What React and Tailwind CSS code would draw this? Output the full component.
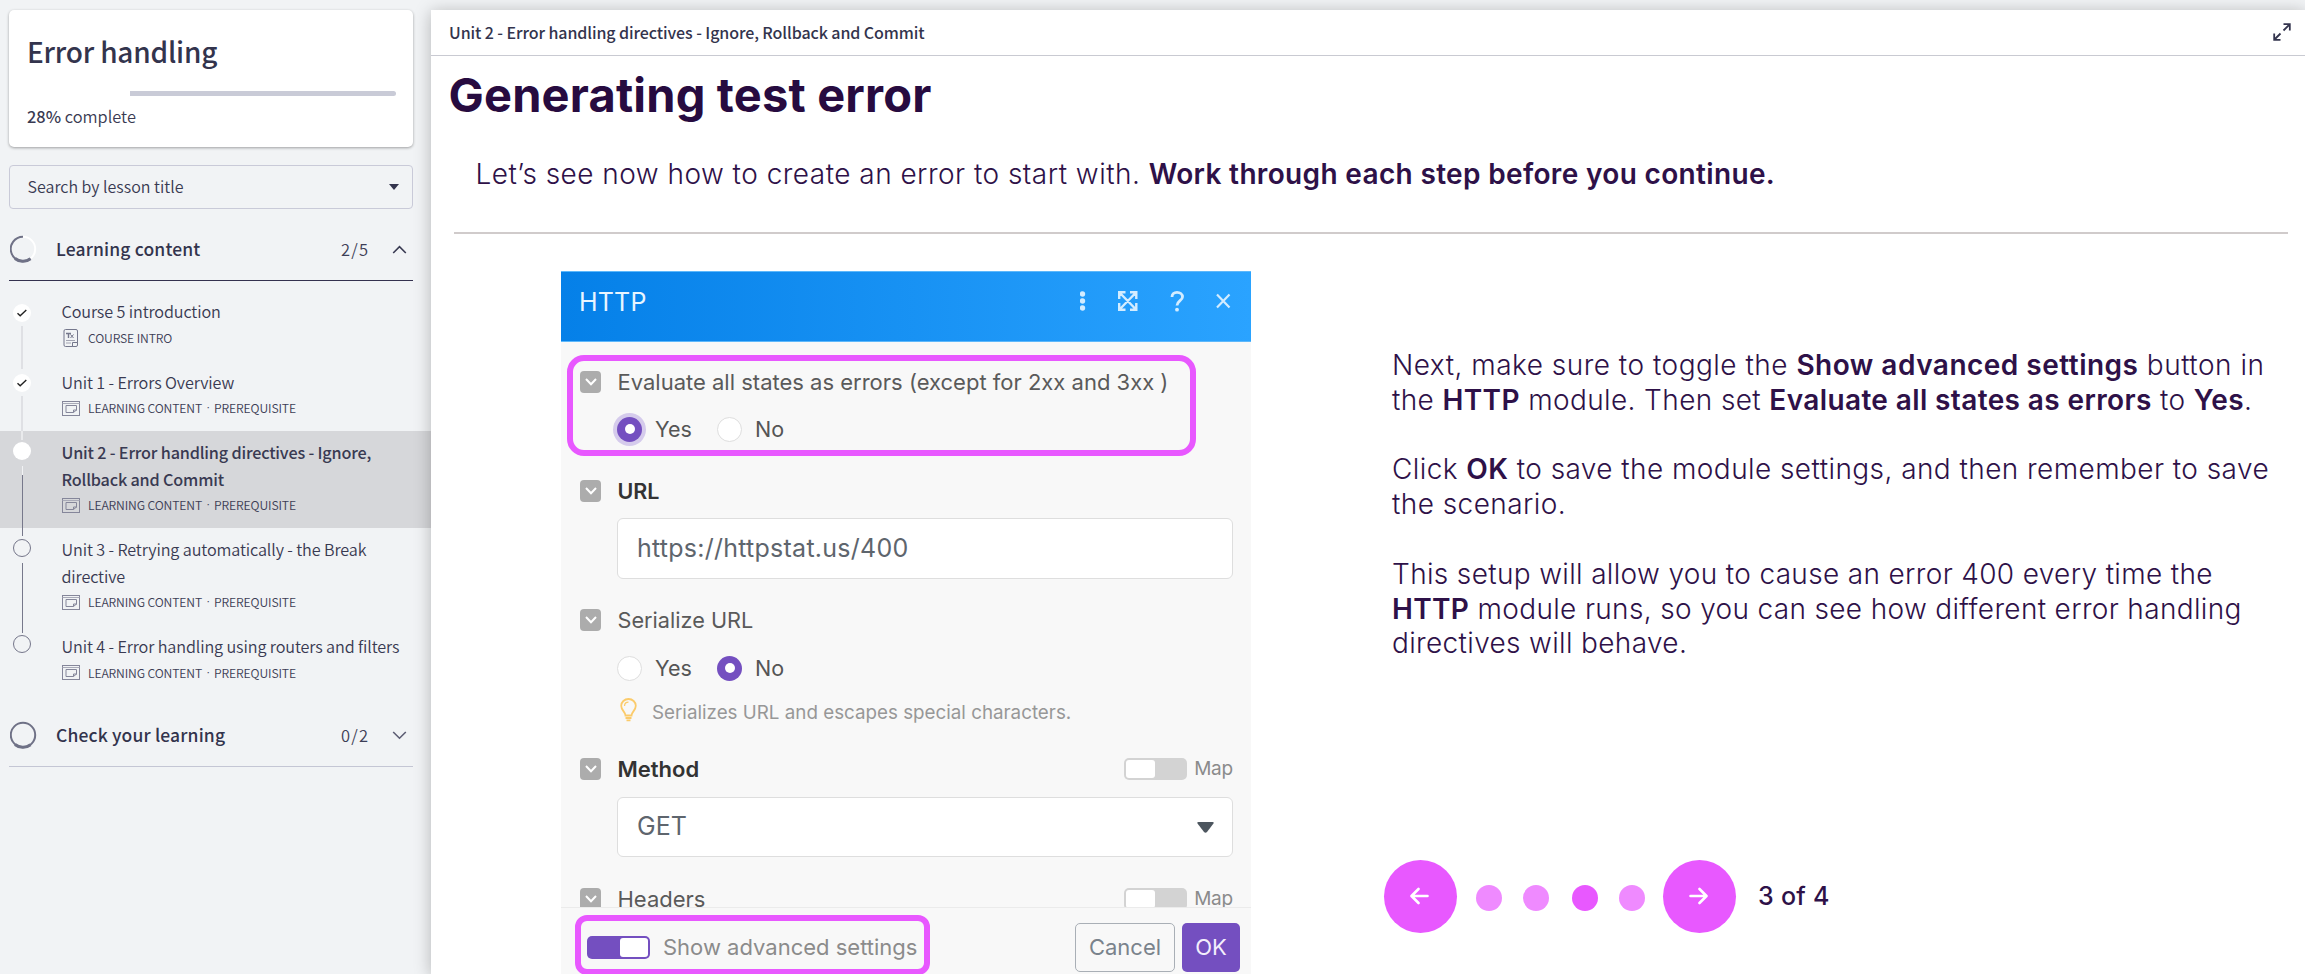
const SANS = "font-['Noto_Sans_CJK_SC',sans-serif]";

function PageIcon() {
  return (
    <svg className="h-[18px] w-[18px]" viewBox="0 0 18 18" fill="none" stroke="#75778c" strokeWidth="1">
      <rect x="2" y="0.5" width="13.5" height="17" rx="1.5" />
      <path d="M4 4.500h5M6.500 4.500v4.500" strokeWidth="1.400" />
      <path d="M8.500 5.500l3 3.500M11.500 5.500l-3 3.500" />
      <path d="M4 11.500h9M4 14h5" stroke="#a3a4b2" />
      <path d="M10.500 17.500v-4h5" fill="#f1f3f5" />
    </svg>
  );
}

function SlideIcon() {
  return (
    <svg className="h-[15px] w-[18px]" viewBox="0 0 18 15" fill="none" stroke="#85869a" strokeWidth="1">
      <rect x="0.5" y="0.5" width="17" height="14" />
      <path d="M0.5 2.5h17" stroke="#a9aab8" />
      <path d="M14.500 9.500v-5h-10.500v7h7.500l3-2.500h-3v2.500" />
    </svg>
  );
}

function Marker({ kind }) {
  if (kind === "done")
    return (
      <span className="flex h-[18px] w-[18px] shrink-0 items-center justify-center rounded-full bg-white">
        <svg className="h-[10px] w-[12px]" viewBox="0 0 12 10" fill="none" stroke="#222" strokeWidth="1.4">
          <path d="M1.5 5.2L4.2 7.8L10.3 2" />
        </svg>
      </span>
    );
  if (kind === "active") return <span className="h-[18px] w-[18px] shrink-0 rounded-full bg-white" />;
  return <span className="h-[18px] w-[18px] shrink-0 rounded-full border border-[#75768a]" />;
}

function Lesson({ lines, meta, kind, pre, stub, gap, line, page }) {
  return (
    <div className={kind === "active" ? "flex bg-[#d6d7da]" : "flex"}>
      <div className="flex w-[61.5px] shrink-0 flex-col items-center pr-[17.5px]">
        <span className={"shrink-0 " + stub} />
        <span className={"shrink-0 " + pre} />
        <Marker kind={kind} />
        <span className={"shrink-0 " + gap} />
        {kind === "active" && <span className="h-[9px] w-[1px] shrink-0 bg-[#f1f2f4]" />}
        <span className={"grow " + line} />
      </div>
      <div className="pt-[8.5px] pb-[10.5px]">
        {lines.map((l) => (
          <div
            key={l}
            className={
              "h-[26.5px] text-[16.2px] leading-[26.5px] whitespace-nowrap text-[#393a52] " +
              (kind === "active" ? "font-medium tracking-[-0.18px]" : "font-[350] tracking-[-0.12px]")
            }
          >
            {l}
          </div>
        ))}
        <div className="flex h-[25px] items-center pt-px">
          <span className="flex w-[26.5px]">{page ? <PageIcon /> : <SlideIcon />}</span>
          <span className="flex text-[12.2px] leading-6 font-[350] tracking-[-0.13px] whitespace-nowrap text-[#3d3e56]">
            {meta.map((m, i) => (
              <span key={m} className="flex">
                {i > 0 && <span className="w-[12px] text-center font-['Inter',sans-serif]">·</span>}
                {m}
              </span>
            ))}
          </span>
        </div>
      </div>
    </div>
  );
}

function Section({ title, count, open }) {
  return (
    <div className={"mr-[18px] ml-[9px] flex h-[63px] items-center border-b " + (open ? "border-[#34314f]" : "border-[#c4c6d4]")}>
      <svg className="ml-px h-[28px] w-[28px]" viewBox="0 0 28 28" fill="none" strokeWidth="2">
        <circle cx="13" cy="14" r="12.2" stroke={open ? "#fff" : "#6f7186"} />
        {open && <path d="M13 1.8A12.2 12.2 0 1 0 20.5 23.6" stroke="#6f7186" />}
        <path d="M5 23.5A12.4 12.4 0 0 0 20.5 23.8" stroke="#6f7186" strokeWidth="3" />
      </svg>
      <span className="ml-[18px] grow text-[17.5px] leading-6 font-medium tracking-[0.15px] text-[#33344d]">{title}</span>
      <span className="w-[51px] text-[16.5px] leading-6 font-[350] tracking-[1.2px] text-[#3d3e56]">{count}</span>
      <svg className="mr-[6px] h-[9px] w-[15px]" viewBox="0 0 15 9" fill="none" stroke={open ? "#393a52" : "#5c5d73"} strokeWidth="1.6">
        <path d={open ? "M1.2 8L7.5 1.6L13.8 8" : "M1.2 1L7.5 7.2L13.8 1"} />
      </svg>
    </div>
  );
}

function Sidebar() {
  const slide = ["LEARNING CONTENT", "PREREQUISITE"];
  return (
    <aside className={"flex w-[431px] shrink-0 flex-col " + SANS}>
      <div className="mt-[10px] mr-[18px] ml-[9px] h-[137px] rounded-[5px] bg-white pt-[21px] pr-[17px] pl-[18px] shadow-[0_1px_3px_rgba(0,0,0,0.35)]">
        <h1 className="text-[28px] leading-10 font-medium tracking-[-0.2px] text-[#33344d]">Error handling</h1>
        <div className="mt-[20px] flex h-[5px]">
          <span className="w-[103px]" />
          <span className="grow rounded-r-sm bg-[#c9cbd7]" />
        </div>
        <p className="mt-[8px] text-[16.4px] leading-6 font-[350] text-[#393a52]">
          <span className="font-medium">28%</span> complete
        </p>
      </div>
      <div className="mt-[18px] mr-[18px] ml-[9px] flex h-[44px] items-center justify-between rounded-[4px] border border-[#c9cad8] pr-[13px] pl-[17.5px]">
        <span className="pb-0.5 text-[16px] leading-6 font-[350] text-[#393a52]">Search by lesson title</span>
        <svg className="h-[6px] w-[10px]" viewBox="0 0 10 6">
          <path d="M0 0h10L5 6z" fill="#33344d" />
        </svg>
      </div>
      <div className="h-[9px]" />
      <Section title="Learning content" count="2/5" open />
      <div className="flex flex-col pt-[8.5px]">
        <Lesson kind="done" page lines={["Course 5 introduction"]} meta={["COURSE INTRO"]} stub="h-0" pre="h-[14px]" gap="h-[4px]" line="w-[2px] bg-[#dfe0e4]" />
        <Lesson kind="done" lines={["Unit 1 - Errors Overview"]} meta={slide} stub="h-[9px] w-[2px] bg-[#dfe0e4]" pre="h-[5px]" gap="h-[4px]" line="w-[2px] bg-[#dfe0e4]" />
        <Lesson
          kind="active"
          lines={["Unit 2 - Error handling directives - Ignore,", "Rollback and Commit"]}
          meta={slide}
          stub="h-[9px] w-[2px] bg-[#e9eaec]"
          pre="h-[2px]"
          gap="h-[6px]"
          line="w-px bg-[#77788b]"
        />
        <Lesson
          kind="todo"
          lines={["Unit 3 - Retrying automatically - the Break", "directive"]}
          meta={slide}
          stub="h-[8px] w-px bg-[#77788b]"
          pre="h-[3px]"
          gap="h-[6px]"
          line="w-px bg-[#77788b]"
        />
        <Lesson kind="todo" lines={["Unit 4 - Error handling using routers and filters"]} meta={slide} stub="h-[8px] w-px bg-[#77788b]" pre="h-[2px]" gap="h-[4px]" line="" />
      </div>
      <div className="h-[9px]" />
      <Section title="Check your learning" count="0/2" />
    </aside>
  );
}

function Collapse() {
  return (
    <span className="mr-[16.5px] flex h-[22px] w-[21px] shrink-0 items-center justify-center rounded-[4px] bg-[#acacac]">
      <svg className="h-[8px] w-[12px]" viewBox="0 0 12 8" fill="none" stroke="#fff" strokeWidth="2">
        <path d="M1 1L6 6.2L11 1" />
      </svg>
    </span>
  );
}

function Radio({ on, halo }) {
  if (on)
    return (
      <span className={"flex h-[25px] w-[25px] items-center justify-center rounded-full bg-[#744fc0] " + (halo ? "shadow-[0_0_0_4px_#d5cbec]" : "")}>
        <span className="h-[10px] w-[10px] rounded-full bg-white" />
      </span>
    );
  return <span className="h-[25px] w-[25px] rounded-full border border-[#dedede] bg-white" />;
}

function YesNo({ yes }) {
  return (
    <div className="flex h-[30px] items-center pl-[37px] text-[21.5px] leading-[30px] text-[#555]">
      <Radio on={yes} halo={yes} />
      <span className="ml-[13px] w-[62px]">Yes</span>
      <Radio on={!yes} />
      <span className="ml-[13px]">No</span>
    </div>
  );
}

function MapSwitch() {
  return (
    <span className="ml-auto flex items-center font-normal">
      <span className="flex h-[22px] w-[63px] rounded-[5px] bg-[#d3d3d3] p-[2px]">
        <span className="w-[29px] rounded-[3px] bg-white" />
      </span>
      <span className="ml-[7px] text-[19px] leading-6 tracking-[-0.2px] text-[#8b8b8b]">Map</span>
    </span>
  );
}

function HttpDialog() {
  return (
    <div className="relative flex h-[703px] w-[690px] shrink-0 flex-col bg-[#f8f8f8] text-[22px] text-[#5a5a5a]">
      <div className="flex h-[71px] shrink-0 items-center border-y border-[#5db8fb] bg-linear-to-r/srgb from-[#0580e8] to-[#2aa3ff] pb-[8px] pl-[18px]">
        <span className="grow text-[25px] tracking-[0.2px] text-[#e9f5ff]">HTTP</span>
        <svg className="mr-[19px] mb-[4px] h-[22px] w-[152px]" viewBox="-2 0 152 22" fill="none" stroke="#d3ecff" strokeWidth="2.4">
          <g fill="#d3ecff" stroke="none">
            <circle cx="0.5" cy="4" r="2.7" />
            <circle cx="0.5" cy="11" r="2.7" />
            <circle cx="0.5" cy="18" r="2.7" />
          </g>
          <path d="M37.500 2.500l16.500 17M54 2.500l-16.500 17M37.200 9V2.200H43.500M48 2.200h6.300V9M54.300 13v6.800H48M43.500 19.800h-6.300V13" />
          <path d="M90 7C90 4 92 2.300 95 2.300S100.500 4 100.500 7C100.500 10.500 95 11 95 15.500" strokeWidth="2.8" />
          <circle cx="95" cy="19.700" r="1.900" fill="#d3ecff" stroke="none" />
          <path d="M135 4.500l12.500 13M147.500 4.500l-12.500 13" strokeWidth="2.200" />
        </svg>
      </div>
      <div className="flex h-[565px] shrink-0 flex-col overflow-hidden pr-[18px] pl-[19px] [&>*]:shrink-0">
        <div className="mt-[25px] flex h-[30px] items-center">
          <Collapse />
          <span className="whitespace-nowrap">Evaluate all states as errors (except for 2xx and 3xx )</span>
        </div>
        <div className="h-[17px]" />
        <YesNo yes />
        <div className="mt-[32px] flex h-[30px] items-center font-semibold text-[#333]">
          <Collapse />
          <span className="text-[21.500px]">URL</span>
        </div>
        <div className="mt-[12px] ml-[37px] flex h-[61px] items-center rounded-[6px] border border-[#dedede] bg-white pl-[19px] text-[25px] tracking-[0.25px] text-[#5e656d]">
          https://httpstat.us/400
        </div>
        <div className="mt-[26px] flex h-[30px] items-center">
          <Collapse />
          <span className="text-[21.700px]">Serialize URL</span>
        </div>
        <div className="h-[18px]" />
        <YesNo />
        <div className="mt-[15px] flex h-[30px] items-center pl-[40px] text-[18.8px] text-[#979797]">
          <svg className="mr-[15px] h-[24px] w-[17px] -translate-y-[3px]" viewBox="0 0 17 24" fill="none" stroke="#fbcb6b" strokeWidth="1.8">
            <path d="M5.500 17.500C5.500 14 1.200 12.500 1.200 7.800A7.300 6.800 0 0 1 15.800 7.800C15.800 12.500 11.500 14 11.500 17.500Z" />
            <path d="M4.500 8A4 4 0 0 1 8.500 4.200" strokeWidth="1.300" />
            <path d="M5.500 20h6M6.500 22.300h4" />
          </svg>
          Serializes URL and escapes special characters.
        </div>
        <div className="mt-[26px] flex h-[30px] items-center font-semibold text-[#333]">
          <Collapse />
          <span>Method</span>
          <MapSwitch />
        </div>
        <div className="mt-[13px] ml-[37px] flex h-[60px] items-center justify-between rounded-[6px] border border-[#dedede] bg-white pr-[18px] pl-[19px] text-[25px] text-[#5e656d]">
          GET
          <svg className="h-[11px] w-[17px]" viewBox="0 0 17 11">
            <path d="M1.500 0h14q2 0 .8 1.700L10 10q-1.500 1.500-3 0L.7 1.700Q-.500 0 1.500 0z" fill="#4d565f" />
          </svg>
        </div>
        <div className="mt-[27px] flex h-[30px] items-center">
          <Collapse />
          <span>Headers</span>
          <MapSwitch />
        </div>
      </div>
      <div className="flex h-[67px] shrink-0 items-center border-t border-[#ebebeb] pt-[13px] pr-[11px] pl-[26px]">
        <span className="flex h-[23px] w-[63px] justify-end rounded-[5px] bg-[#744fc0] p-[2px]">
          <span className="w-[28px] rounded-[3px] bg-white" />
        </span>
        <span className="ml-[13px] grow whitespace-nowrap text-[#8b8b8b]">Show advanced settings</span>
        <span className="flex h-[49px] w-[100px] items-center justify-center rounded-[5px] border-[1.5px] border-[#a9afb6] text-[#7a838c]">Cancel</span>
        <span className="ml-[7px] flex h-[49px] w-[58px] items-center justify-center rounded-[5px] bg-[#744fc0] text-[#f3eefc]">OK</span>
      </div>
      <div className="absolute top-[84px] left-[6px] h-[101px] w-[629px] rounded-[17px] border-[6px] border-[#e858ff]" />
      <div className="absolute top-[644px] left-[14px] h-[60px] w-[355px] rounded-[12px] border-[6px] border-[#e858ff]" />
    </div>
  );
}

function Arrow({ back }) {
  return (
    <span className={"flex h-[73px] w-[73px] items-center justify-center rounded-full bg-[#e858ff] pb-[2px] " + (back ? "pr-[2px]" : "pr-[3px]")}>
      <svg className="h-[18px] w-[20px]" viewBox="0 0 20 18" fill="none" stroke="#fff" strokeWidth="2.6" strokeLinecap="round" strokeLinejoin="round">
        <path d={back ? "M17.500 9H2M8.500 2L1.500 9L8.500 16" : "M2.500 9H18M11.500 2L18.500 9L11.500 16"} />
      </svg>
    </span>
  );
}

function Notes() {
  return (
    <div className="ml-[133px] flex grow flex-col pt-[77px]">
      <div className="flex h-[314px] flex-col gap-[34.8px] pl-[8px] text-[28px] leading-[34.8px] font-light whitespace-nowrap [&_b]:font-semibold">
        <p>
          <span className="tracking-[0.49px]">
            Next, make sure to toggle the <b>Show advanced settings</b> button in
          </span>
          <br />
          <span className="tracking-[0.38px]">
            the <b>HTTP</b> module. Then set <b>Evaluate all states as errors</b> to <b>Yes</b>.
          </span>
        </p>
        <p className="tracking-[0.43px]">
          Click <b>OK</b> to save the module settings, and then remember to save
          <br />
          the scenario.
        </p>
        <p className="tracking-[0.34px]">
          This setup will allow you to cause an error 400 every time the
          <br />
          <b>HTTP</b> module runs, so you can see how different error handling
          <br />
          directives will behave.
        </p>
      </div>
      <div className="mt-[198px] flex items-center">
        <Arrow back />
        <span className="mt-[3px] ml-[19px] h-[26px] w-[26px] rounded-full bg-[#ef8aff]" />
        <span className="mt-[3px] ml-[21px] h-[26px] w-[26px] rounded-full bg-[#ef8aff]" />
        <span className="mt-[3px] ml-[23px] h-[26px] w-[26px] rounded-full bg-[#e858ff]" />
        <span className="mt-[3px] ml-[21px] mr-[18px] h-[26px] w-[26px] rounded-full bg-[#ef8aff]" />
        <Arrow />
        <span className="ml-[22px] text-[25px] font-medium tracking-[0.3px]">3 of 4</span>
      </div>
    </div>
  );
}

export default function App() {
  return (
    <div className="flex h-[974px] w-[2305px] overflow-hidden bg-[#f1f3f5]">
      <Sidebar />
      <main className="mt-[10px] flex h-[964px] grow flex-col bg-white shadow-[0_2px_16px_rgba(0,0,0,0.26)]">
        <header className="flex h-[46px] shrink-0 items-center justify-between border-b border-[#c9cad2] pr-[14px] pl-[18px]">
          <span className={"pb-0.5 text-[16px] leading-6 font-medium tracking-[-0.09px] text-[#33344d] " + SANS}>
            Unit 2 - Error handling directives - Ignore, Rollback and Commit
          </span>
          <svg className="mb-[1px] h-[18px] w-[18px]" viewBox="0 0 18 18" fill="none" stroke="#33344d" strokeWidth="1.8">
            <path d="M10.500 7.500L16.500 1.500M10.500 1.200H16.800v6.300M7.500 10.500L1.500 16.500M1.200 10.500V16.800h6.300" />
          </svg>
        </header>
        <div className="flex flex-col font-['Inter',sans-serif] text-[#2e1148]">
          <h2 className="mt-[9px] pl-[17.5px] text-[47px] leading-[60px] font-bold tracking-[0.18px] text-[#270b40]">Generating test error</h2>
          <p className="mt-[29px] h-[40px] pl-[44.5px] text-[28px] leading-[40px] font-light tracking-[0.47px] whitespace-nowrap">
            Let’s see now how to create an error to start with. <b className="font-semibold tracking-[0.34px]">Work through each step before you continue.</b>
          </p>
          <div className="mt-[38px] mr-[17px] ml-[23px] h-[2px] bg-[#d0cbcb]" />
          <div className="flex pt-[37px] pl-[130px]">
            <HttpDialog />
            <Notes />
          </div>
        </div>
      </main>
    </div>
  );
}
